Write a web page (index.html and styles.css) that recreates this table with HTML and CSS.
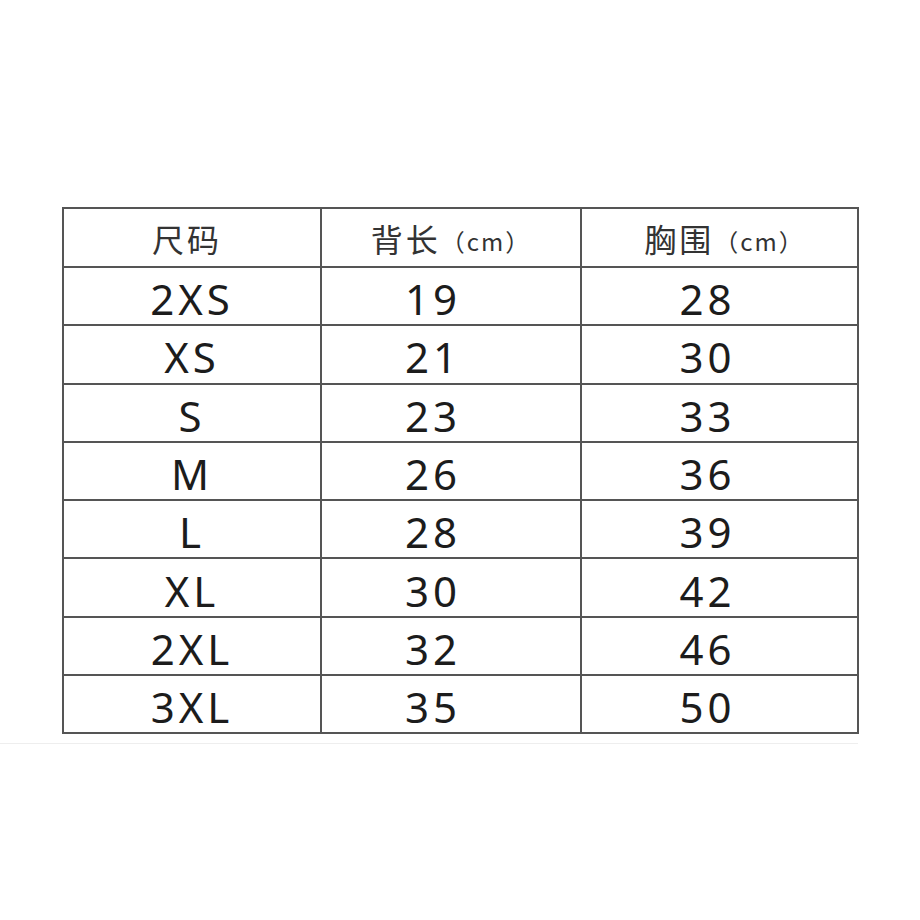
FILE: index.html
```html
<!DOCTYPE html>
<html lang="zh-CN">
<head>
<meta charset="utf-8">
<title>尺码表</title>
<link rel="stylesheet" href="styles.css">
</head>
<body>
<div class="page">
  <div class="sheet">
    <table class="size-table">
      <colgroup>
        <col class="c1"><col class="c2"><col class="c3">
      </colgroup>
      <thead>
        <tr>
          <th class="h1">尺码</th>
          <th class="h2">背长<span class="unit">（cm）</span></th>
          <th class="h3">胸围<span class="unit">（cm）</span></th>
        </tr>
      </thead>
      <tbody>
        <tr><td>2XS</td><td class="v2">19</td><td class="v3">28</td></tr>
        <tr><td>XS</td><td class="v2">21</td><td class="v3">30</td></tr>
        <tr><td>S</td><td class="v2">23</td><td class="v3">33</td></tr>
        <tr><td>M</td><td class="v2">26</td><td class="v3">36</td></tr>
        <tr><td>L</td><td class="v2">28</td><td class="v3">39</td></tr>
        <tr><td>XL</td><td class="v2">30</td><td class="v3">42</td></tr>
        <tr><td>2XL</td><td class="v2">32</td><td class="v3">46</td></tr>
        <tr><td>3XL</td><td class="v2">35</td><td class="v3">50</td></tr>
      </tbody>
    </table>
  </div>
</div>
</body>
</html>
```

FILE: styles.css
```css
html, body {
  margin: 0;
  padding: 0;
  background: #ffffff;
}

.page {
  width: 920px;
  height: 920px;
  padding-top: 207px;
  box-sizing: border-box;
}

.sheet {
  width: 858px;
  padding-left: 62px;
  padding-bottom: 9px;
  box-sizing: border-box;
  border-bottom: 1px solid #eeeeee;
}

.size-table {
  width: 795px;
  border-collapse: collapse;
  table-layout: fixed;
  font-family: "Noto Sans", "Noto Sans CJK SC", sans-serif;
  color: #1c1c1c;
}

.c1 { width: 258px; }
.c2 { width: 260px; }
.c3 { width: 277px; }

.size-table th,
.size-table td {
  border: 2px solid #555555;
  text-align: center;
  vertical-align: middle;
  padding: 0;
}

.size-table th {
  height: 59px;
  box-sizing: border-box;
  font-family: "Noto Sans CJK SC", sans-serif;
  font-weight: 400;
  font-size: 32px;
  letter-spacing: 3px;
  color: #333333;
  line-height: 1;
}

.size-table th.h1 {
  padding-right: 10px;
}

.size-table th.h3 {
  padding-left: 10px;
}

.unit {
  font-size: 24px;
  letter-spacing: 2px;
  vertical-align: 1px;
}

.size-table td {
  height: 58.3px;
  font-size: 42px;
  letter-spacing: 4px;
  line-height: 1;
  padding-top: 6px;
  box-sizing: border-box;
}

.size-table td.v2 {
  padding-right: 36px;
}

.size-table td.v3 {
  padding-right: 24px;
}
```
